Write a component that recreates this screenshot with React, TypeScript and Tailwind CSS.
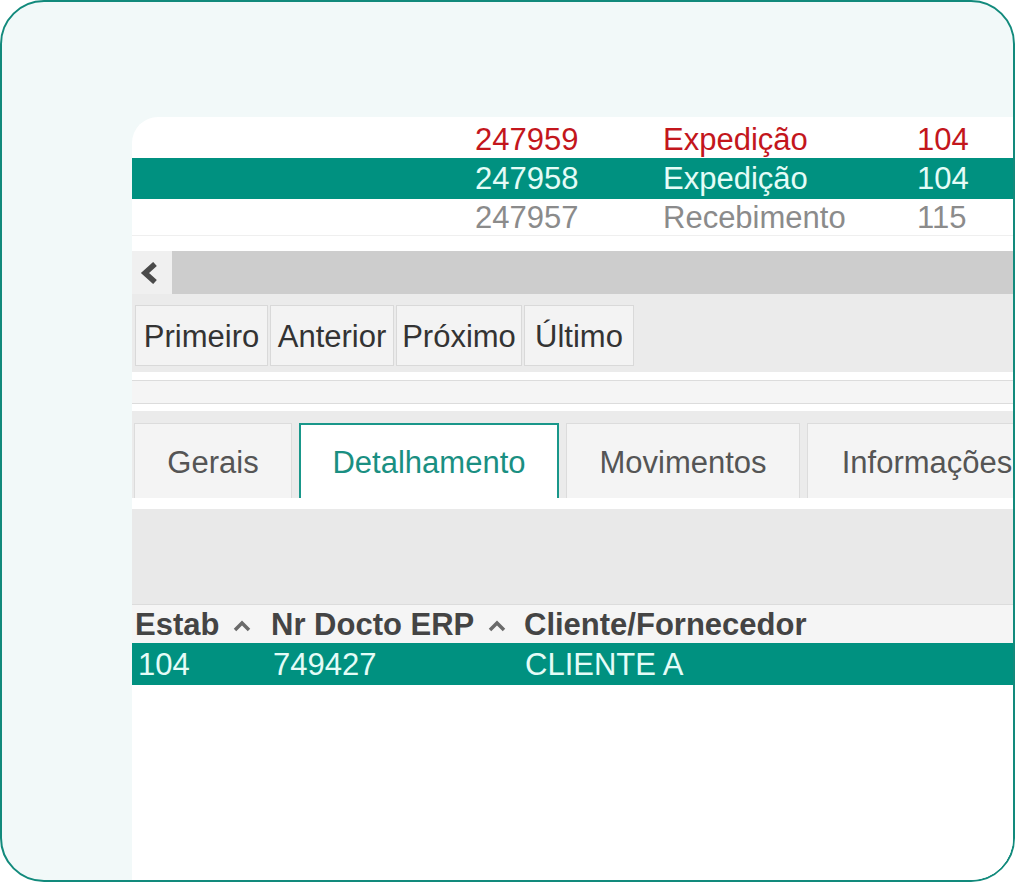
const topRows = [
  { id: '247959', tipo: 'Expedição', estab: '104', tone: 'red' },
  { id: '247958', tipo: 'Expedição', estab: '104', tone: 'selected' },
  { id: '247957', tipo: 'Recebimento', estab: '115', tone: 'gray' },
]

const navButtons = [
  { label: 'Primeiro', width: 'w-[133px]' },
  { label: 'Anterior', width: 'w-[124px]' },
  { label: 'Próximo', width: 'w-[126px]' },
  { label: 'Último', width: 'w-[110px]' },
]

const tabs = [
  { label: 'Gerais', width: 'w-[158px]' },
  { label: 'Detalhamento', width: 'w-[260px]', active: true },
  { label: 'Movimentos', width: 'w-[234px]' },
  { label: 'Informações', width: 'w-[240px]' },
]

function Caret() {
  return (
    <svg width="20" height="12" viewBox="0 0 20 12" className="ml-[13px] self-start mt-[11px]">
      <polyline points="3,10 10,3 17,10" fill="none" stroke="#6a6a6a" strokeWidth="3.5" />
    </svg>
  )
}

export default function App() {
  return (
    <div className="w-[1015px] h-[882px] bg-white font-['Liberation_Sans'] text-[31px]">
      <div className="h-full w-full rounded-[44px] border-2 border-[#128a7c] bg-[#f2f9f9] overflow-hidden pt-[115px] pl-[130px] flex flex-col">
        <div className="flex-1 bg-white rounded-tl-[26px] overflow-hidden flex flex-col">
          {/* grid rows */}
          <div className="flex flex-col">
            {topRows.map((row, i) => {
              const cls =
                row.tone === 'red'
                  ? 'text-[#c3161c] h-[41px] pt-[4px]'
                  : row.tone === 'selected'
                    ? 'bg-[#009180] text-[#e4fcf7] h-[41px]'
                    : 'text-[#8b8b8b] h-[37px] border-b border-[#efefef]'
              return (
                <div key={i} className={`flex items-center leading-none pl-[343px] ${cls}`}>
                  <span className="w-[188px]">{row.id}</span>
                  <span className="w-[254px]">{row.tipo}</span>
                  <span>{row.estab}</span>
                </div>
              )
            })}
          </div>

          {/* horizontal scrollbar */}
          <div className="mt-[15px] h-[43px] flex bg-[#cdcdcd]">
            <div className="w-[40px] bg-[#f0f0f0] flex items-center pl-[8px]">
              <svg width="18" height="22" viewBox="0 0 18 22">
                <polyline points="15,2 5,11 15,20" fill="none" stroke="#4a4a4a" strokeWidth="5.5" />
              </svg>
            </div>
          </div>

          {/* navigation buttons */}
          <div className="bg-[#ebebeb] pt-[11px] pb-[6px] pl-[3px] flex gap-[2px]">
            {navButtons.map((b) => (
              <div
                key={b.label}
                className={`${b.width} h-[61px] pt-[2px] flex items-center justify-center bg-[#f3f3f3] border border-[#d9d9d9] text-[#333] leading-none whitespace-nowrap`}
              >
                {b.label}
              </div>
            ))}
          </div>

          <div className="h-[8px]" />
          <div className="h-[24px] bg-[#f5f5f5] border-y border-[#dcdcdc]" />
          <div className="h-[7px]" />

          {/* tabs */}
          <div className="bg-[#ebebeb] pt-[12px] pl-[2px] flex items-end gap-[7px] overflow-hidden">
            {tabs.map((t) => (
              <div
                key={t.label}
                className={`${t.width} shrink-0 h-[75px] pt-[2px] flex items-center justify-center leading-none whitespace-nowrap ${
                  t.active
                    ? 'bg-white border-2 border-b-0 border-[#19978a] text-[#1a8f82]'
                    : 'bg-[#f4f4f4] border border-b-0 border-[#dcdcdc] text-[#555]'
                }`}
              >
                {t.label}
              </div>
            ))}
          </div>
          <div className="h-[11px] bg-white" />
          <div className="h-[96px] bg-[#e9e9e9] border-b border-[#dcdcdc]" />

          {/* detail grid */}
          <div className="h-[38px] bg-[#f5f5f5] flex items-center pl-[3px] font-bold text-[#444] leading-none whitespace-nowrap">
            <span className="w-[136px] flex items-center">
              Estab
              <Caret />
            </span>
            <span className="w-[253px] flex items-center">
              Nr Docto ERP
              <Caret />
            </span>
            <span>Cliente/Fornecedor</span>
          </div>
          <div className="h-[42px] bg-[#009180] text-[#e4fcf7] flex items-center leading-none whitespace-nowrap">
            <span className="w-[141px] pl-[6px]">104</span>
            <span className="w-[252px]">749427</span>
            <span>CLIENTE A</span>
          </div>
          <div className="flex-1 bg-white" />
        </div>
      </div>
    </div>
  )
}
